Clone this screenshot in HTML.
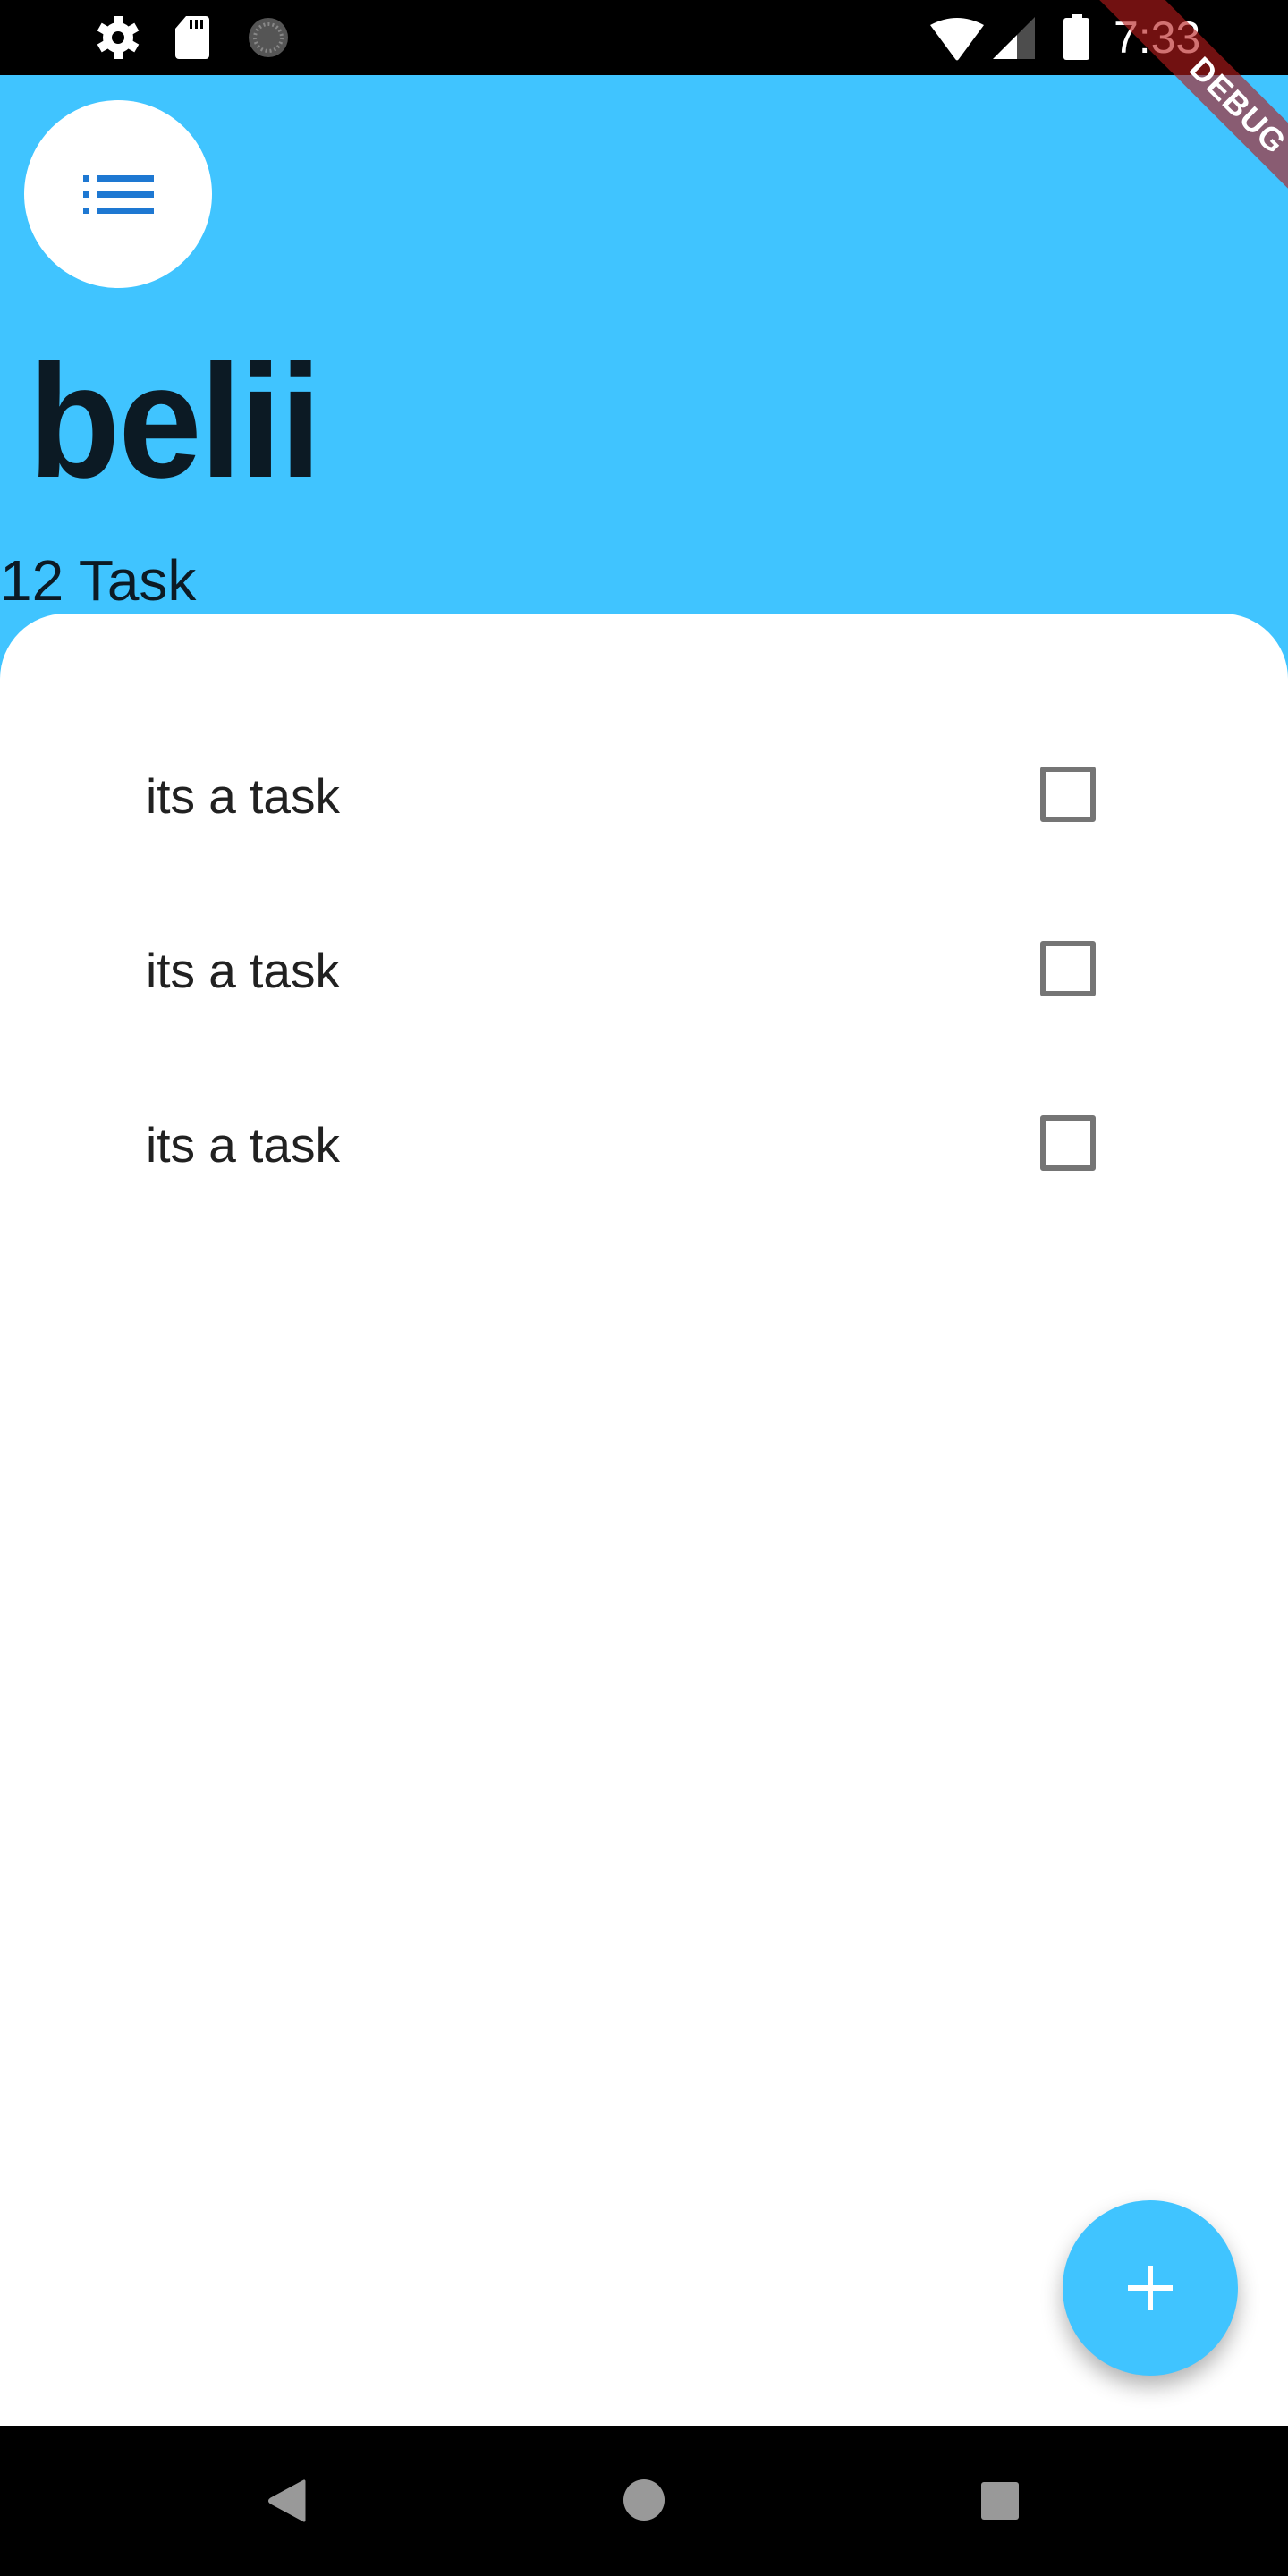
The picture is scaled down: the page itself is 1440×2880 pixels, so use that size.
<!DOCTYPE html>
<html><head><meta charset="utf-8"><style>
*{margin:0;padding:0;box-sizing:border-box}
html,body{width:1440px;height:2880px;overflow:hidden;background:#fff;font-family:"Liberation Sans",sans-serif}
.abs{position:absolute}
</style></head><body>
<div class="abs" style="left:0;top:0;width:1440px;height:800px;background:#40C4FF"></div>
<div class="abs" style="left:0;top:0;width:1440px;height:84px;background:#000"></div>
<!-- status icons -->
<svg class="abs" style="left:100px;top:14px" width="240" height="56" viewBox="0 0 240 56">
<g fill="#fff">
<circle cx="32" cy="28" r="17"/>
<rect x="27" y="4" width="10" height="48"/>
<rect x="27" y="4" width="10" height="48" transform="rotate(60 32 28)"/>
<rect x="27" y="4" width="10" height="48" transform="rotate(120 32 28)"/>
<path d="M108 4h22a4 4 0 0 1 4 4v40a4 4 0 0 1-4 4h-30a4 4 0 0 1-4-4V18z"/>
</g>
<circle cx="32" cy="28" r="7" fill="#000"/>
<g fill="#000"><rect x="112" y="8" width="3" height="10"/><rect x="118" y="8" width="3" height="10"/><rect x="124" y="8" width="3" height="10"/></g>
<circle cx="200" cy="28" r="22" fill="#555"/>
<circle cx="200" cy="28" r="15" fill="none" stroke="#888" stroke-width="4" stroke-dasharray="2 3"/>
</svg>
<svg class="abs" style="left:1040px;top:14px" width="180" height="56" viewBox="0 0 180 56">
<path d="M0 12 Q30 -4 60 12 L32 50 Q30 53 28 50Z" fill="#fff" transform="translate(0,2)"/>
<path d="M70 52 L97 25 L97 52Z" fill="#fff"/>
<path d="M97 25 L117 5 L117 52 L97 52Z" fill="#4d4d4d"/>
</svg>
<svg class="abs" style="left:1189px;top:16px" width="30" height="52" viewBox="0 0 30 52"><rect x="9" y="0" width="12" height="6" fill="#fff"/><rect x="0" y="4" width="29" height="47" rx="3" fill="#fff"/></svg>
<div class="abs" style="left:1245px;top:14px;font-size:50px;color:#fff;line-height:56px">7:33</div>
<!-- debug banner -->
<div class="abs" style="left:1184px;top:92px;width:400px;height:52px;background:rgba(183,28,28,0.62);transform:rotate(45deg);color:#fff;font-weight:bold;font-size:36px;line-height:52px;text-align:center;letter-spacing:1px">DEBUG</div>
<!-- menu circle -->
<div class="abs" style="left:27px;top:112px;width:210px;height:210px;border-radius:50%;background:#fff"></div>
<svg class="abs" style="left:93px;top:196px" width="80" height="44" viewBox="0 0 80 44"><g fill="#1E78D2">
<rect x="0" y="0" width="7" height="7"/><rect x="16" y="0" width="63" height="7"/>
<rect x="0" y="18" width="7" height="7"/><rect x="16" y="18" width="63" height="7"/>
<rect x="0" y="36" width="7" height="7"/><rect x="16" y="36" width="63" height="7"/></g></svg>
<div class="abs" style="left:32px;top:372px;font-size:180px;font-weight:bold;color:#0C1A24;line-height:200px;transform:scaleX(0.93);transform-origin:left top;letter-spacing:-2px">belii</div>
<div class="abs" style="left:0;top:612px;font-size:64px;color:#0C1A24;line-height:74px">12 Task</div>
<!-- card -->
<div class="abs" style="left:0;top:686px;width:1440px;height:2026px;background:#fff;border-radius:73px 73px 0 0"></div>
<div class="abs" style="left:163px;top:858px;font-size:55px;color:#212121;line-height:64px">its a task</div>
<div class="abs" style="left:163px;top:1053px;font-size:55px;color:#212121;line-height:64px">its a task</div>
<div class="abs" style="left:163px;top:1248px;font-size:55px;color:#212121;line-height:64px">its a task</div>
<div class="abs" style="left:1163px;top:857px;width:62px;height:62px;border:6px solid #757575;border-radius:3px"></div>
<div class="abs" style="left:1163px;top:1052px;width:62px;height:62px;border:6px solid #757575;border-radius:3px"></div>
<div class="abs" style="left:1163px;top:1247px;width:62px;height:62px;border:6px solid #757575;border-radius:3px"></div>
<!-- FAB -->
<div class="abs" style="left:1188px;top:2460px;width:196px;height:196px;border-radius:50%;background:#40C4FF;box-shadow:0 12px 24px rgba(0,0,0,0.3)"></div>
<div class="abs" style="left:1284px;top:2533px;width:5px;height:50px;background:#fff"></div>
<div class="abs" style="left:1261px;top:2555px;width:50px;height:6px;background:#fff"></div>
<!-- nav -->
<div class="abs" style="left:0;top:2712px;width:1440px;height:168px;background:#000"></div>
<svg class="abs" style="left:300px;top:2772px" width="42" height="48" viewBox="0 0 42 48"><path d="M40 2 L40 46 L3 26 Q0 24 3 22Z" fill="#999" stroke="#999" stroke-width="3" stroke-linejoin="round"/></svg>
<div class="abs" style="left:697px;top:2772px;width:46px;height:46px;border-radius:50%;background:#999"></div>
<div class="abs" style="left:1097px;top:2775px;width:42px;height:42px;border-radius:3px;background:#999"></div>
</body></html>
